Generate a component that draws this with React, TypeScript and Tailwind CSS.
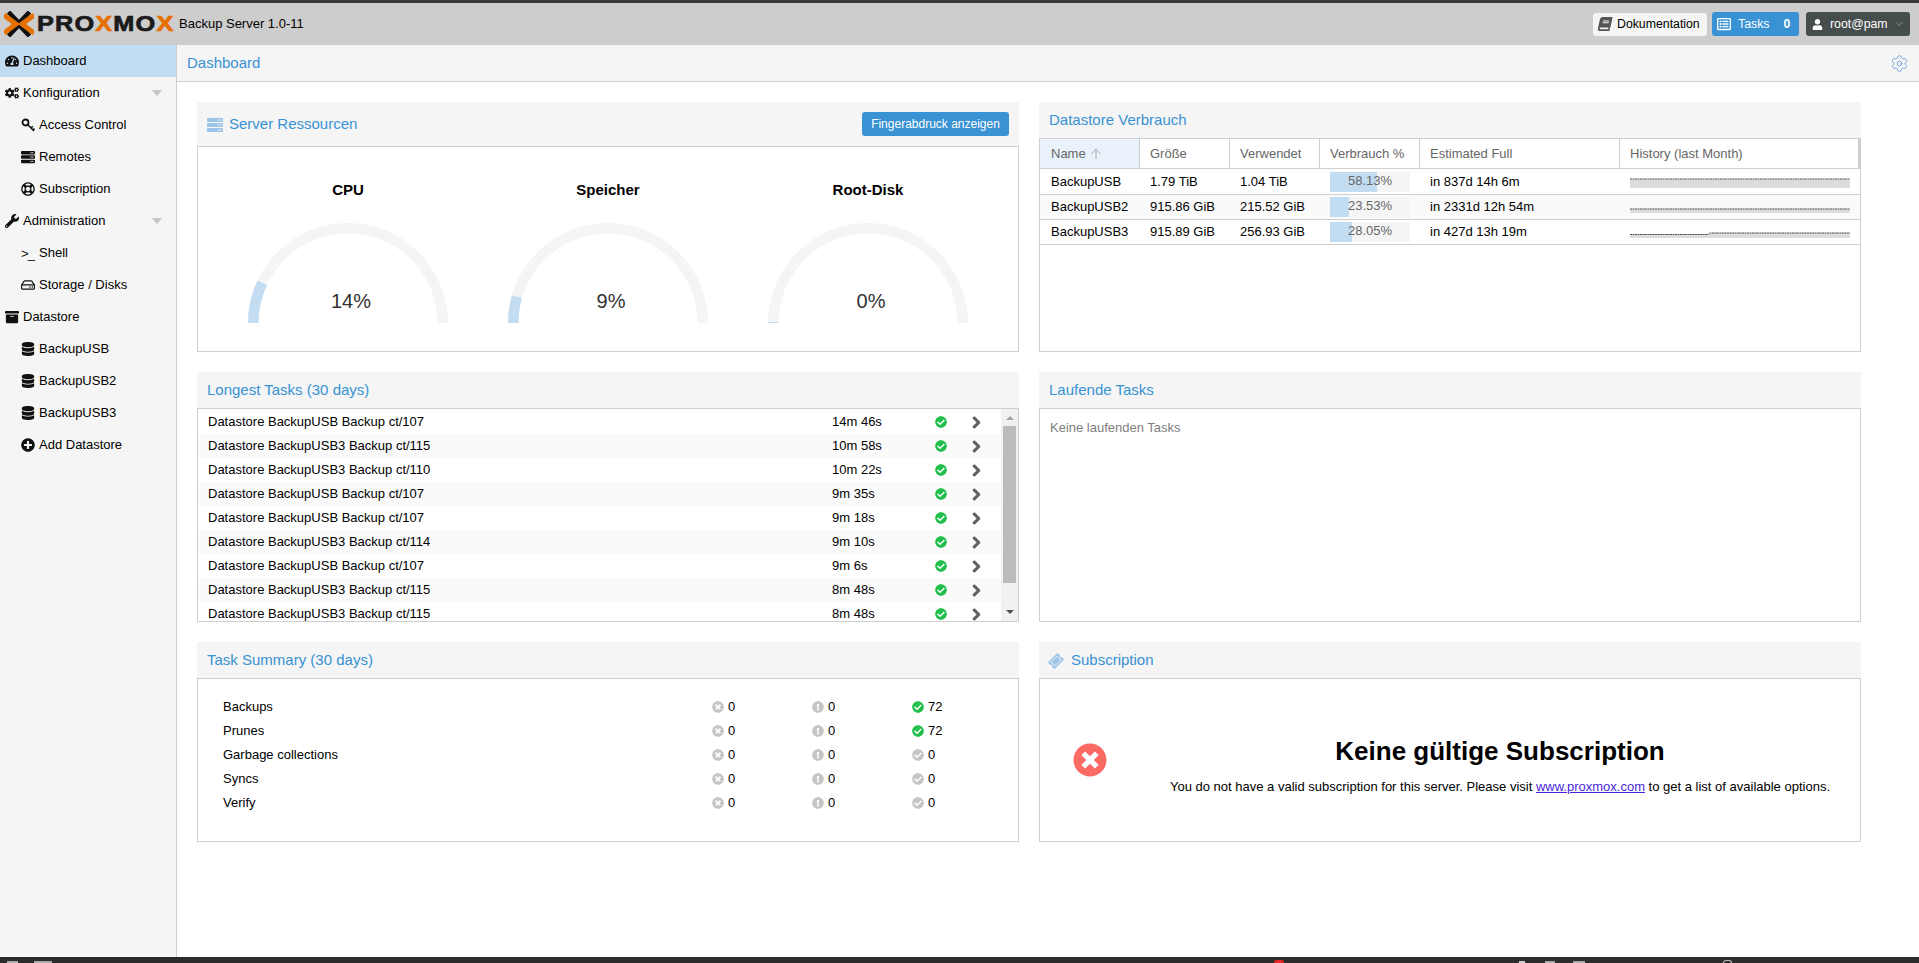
import React from 'react';
import {
  FaTachometerAlt, FaCogs, FaServer, FaRegLifeRing, FaWrench, FaRegHdd, FaArchive, FaDatabase,
  FaPlusCircle, FaBook, FaRegListAlt, FaUser, FaCheckCircle, FaChevronRight,
  FaTimesCircle, FaExclamationCircle, FaTicketAlt,
} from 'react-icons/fa';
import { ArrowUp, ChevronDown, Settings } from 'lucide-react';

const KeyIcon = () => (
  <svg width="14" height="14" viewBox="0 0 14 14" fill="none" stroke="#111">
    <circle cx="4.5" cy="4.5" r="3" strokeWidth="1.8" />
    <path d="M6.8 6.8 L13 13 M10 10 L11.8 8.2 M12 12 L13.5 10.5" strokeWidth="1.6" />
  </svg>
);

const menu = [
  { label: 'Dashboard', icon: <FaTachometerAlt />, active: true },
  { label: 'Konfiguration', icon: <FaCogs />, caret: true },
  { label: 'Access Control', icon: <KeyIcon />, sub: true },
  { label: 'Remotes', icon: <FaServer />, sub: true },
  { label: 'Subscription', icon: <FaRegLifeRing />, sub: true },
  { label: 'Administration', icon: <FaWrench />, caret: true },
  { label: 'Shell', icon: <span className="text-[13px] leading-none tracking-[-1px]">&gt;_</span>, sub: true },
  { label: 'Storage / Disks', icon: <FaRegHdd />, sub: true },
  { label: 'Datastore', icon: <FaArchive /> },
  { label: 'BackupUSB', icon: <FaDatabase />, sub: true },
  { label: 'BackupUSB2', icon: <FaDatabase />, sub: true },
  { label: 'BackupUSB3', icon: <FaDatabase />, sub: true },
  { label: 'Add Datastore', icon: <FaPlusCircle />, sub: true },
];

const gauges = [
  { title: 'CPU', pct: 14 },
  { title: 'Speicher', pct: 9 },
  { title: 'Root-Disk', pct: 0 },
];

const stores = [
  { name: 'BackupUSB', size: '1.79 TiB', used: '1.04 TiB', pct: 58.13, est: 'in 837d 14h 6m', line: 'M0 5 L220 5 L220 14 L0 14 Z', top: 'M0 5 L220 5' },
  { name: 'BackupUSB2', size: '915.86 GiB', used: '215.52 GiB', pct: 23.53, est: 'in 2331d 12h 54m', line: 'M0 10 L220 10 L220 14 L0 14 Z', top: 'M0 10 L220 10' },
  { name: 'BackupUSB3', size: '915.89 GiB', used: '256.93 GiB', pct: 28.05, est: 'in 427d 13h 19m', line: 'M0 10.5 L78 10.5 L80 9 L220 9 L220 14 L0 14 Z', top: 'M0 10.5 L78 10.5 L80 9 L220 9' },
];

const longest = [
  ['Datastore BackupUSB Backup ct/107', '14m 46s'],
  ['Datastore BackupUSB3 Backup ct/115', '10m 58s'],
  ['Datastore BackupUSB3 Backup ct/110', '10m 22s'],
  ['Datastore BackupUSB Backup ct/107', '9m 35s'],
  ['Datastore BackupUSB Backup ct/107', '9m 18s'],
  ['Datastore BackupUSB3 Backup ct/114', '9m 10s'],
  ['Datastore BackupUSB Backup ct/107', '9m 6s'],
  ['Datastore BackupUSB3 Backup ct/115', '8m 48s'],
  ['Datastore BackupUSB3 Backup ct/115', '8m 48s'],
];

const summary = [
  ['Backups', 72],
  ['Prunes', 72],
  ['Garbage collections', 0],
  ['Syncs', 0],
  ['Verify', 0],
];

// half ring from the left foot over the top, r=94.75 and 10.5 wide
function Gauge({ title, pct }: { title: string; pct: number }) {
  const len = Math.PI * 94.75;
  return (
    <div className="flex w-[200px] flex-col items-center">
      <div className="mt-[33px] h-[20px] text-[15px] leading-[20px] font-bold text-black">{title}</div>
      <div className="relative mt-[23px] h-[100px] w-[200px]">
        <svg width="200" height="100" viewBox="0 0 200 100" className="block">
          <path d="M5.25 100 A94.75 94.75 0 0 1 194.75 100" fill="none" stroke="#f5f5f5" strokeWidth="10.5" />
          <path
            d="M5.25 100 A94.75 94.75 0 0 1 194.75 100"
            fill="none"
            stroke="#c2ddf2"
            strokeWidth="10.5"
            strokeDasharray={`${Math.max((len * pct) / 100, 1)} ${len}`}
          />
        </svg>
        <div className="absolute top-[66px] left-[3px] w-full text-center text-[20px] leading-[24px] text-[#333]">{pct}%</div>
      </div>
    </div>
  );
}

function Panel({ title, icon, right, tall, className, children }: { title: string; icon?: React.ReactNode; right?: React.ReactNode; tall?: boolean; className?: string; children: React.ReactNode }) {
  return (
    <section className={`flex min-h-0 flex-col ${className ?? ''}`}>
      <header className={`flex shrink-0 items-center justify-between bg-[#f5f5f5] pr-[10px] pl-[10px] ${tall ? 'h-[44px]' : 'h-[36px]'}`}>
        <div className="flex items-center gap-[6px] pt-[1px] text-[15px] text-[#3892d4]">
          {icon}
          <span>{title}</span>
        </div>
        {right}
      </header>
      <div className="min-h-0 flex-1 border border-[#cfcfcf] bg-white">{children}</div>
    </section>
  );
}

function Count({ kind, value }: { kind: 'err' | 'warn' | 'ok'; value: number }) {
  const cls = value > 0 ? 'text-[#21bf4b]' : 'text-[#c5c5c5]';
  return (
    <div className="flex w-[100px] items-center gap-[4px]">
      {kind === 'err' && <FaTimesCircle className="text-[12px] text-[#c5c5c5]" />}
      {kind === 'warn' && <FaExclamationCircle className="text-[12px] text-[#c5c5c5]" />}
      {kind === 'ok' && <FaCheckCircle className={`text-[12px] ${cls}`} />}
      <span>{value}</span>
    </div>
  );
}

export default function App() {
  return (
    <div className="flex h-screen flex-col overflow-hidden bg-white text-[13px] text-black [font-family:Liberation_Sans,Arial,sans-serif]">
      <div className="h-[3px] shrink-0 bg-[#3a3a3a]" />
      <div className="flex h-[42px] shrink-0 items-center bg-[#cdcdcd] pr-[9px] pl-[4px]">
        <svg width="30" height="26" viewBox="0 0 30 26" className="shrink-0">
          <path d="M4.5 1 L15 12 L25.5 1 M4.5 25 L15 14 L25.5 25" fill="none" stroke="#111" strokeWidth="4.5" />
          <path d="M0 4 L12 13 L0 22 M30 4 L18 13 L30 22" fill="none" stroke="#e57000" strokeWidth="5" />
        </svg>
        <div className="ml-[3px] w-[137px] origin-left scale-x-[1.15] text-[22px] leading-none font-bold tracking-[1px] whitespace-nowrap text-[#1a1a1a] [-webkit-text-stroke:0.7px]">
          PRO<span className="text-[#e57000]">X</span>MO<span className="text-[#e57000]">X</span>
        </div>
        <div className="ml-[5px]">Backup Server 1.0-11</div>
        <div className="flex-1" />
        <div className="flex h-[23px] w-[114px] items-center gap-[5px] rounded-[3px] bg-[#f5f5f5] pl-[5px] text-[12.3px]">
          <FaBook className="shrink-0 -skew-x-12 text-[14px] text-[#555]" />
          <span>Dokumentation</span>
        </div>
        <div className="ml-[5px] flex h-[24px] w-[87px] items-center rounded-[3px] bg-[#3892d4] pl-[5px] text-[12.3px] text-white">
          <FaRegListAlt className="text-[14px]" />
          <span className="ml-[7px]">Tasks</span>
          <span className="ml-[14px] font-bold">0</span>
        </div>
        <div className="ml-[7px] flex h-[24px] w-[104px] items-center rounded-[3px] bg-[#464d4d] pl-[6px] text-[12.3px] text-white">
          <FaUser className="text-[11px]" />
          <span className="ml-[7px]">root@pam</span>
          <ChevronDown size={12} strokeWidth={1} className="ml-[5px] text-[#ccc]" />
        </div>
      </div>

      <div className="flex min-h-0 flex-1">
        <nav className="w-[177px] shrink-0 border-r border-[#cfcfcf] bg-[#f5f5f5]">
          {menu.map((m) => (
            <div
              key={m.label}
              className={`flex h-[32px] items-center ${m.active ? 'bg-[#c2ddf2]' : ''} ${m.sub ? 'pl-[20px]' : 'pl-[4px]'}`}
            >
              <span className="flex w-[15px] shrink-0 items-center justify-center text-[14px] text-[#111]">{m.icon}</span>
              <span className="ml-[4px]">{m.label}</span>
              {m.caret && <span className="mr-[14px] ml-auto h-0 w-0 border-x-[5px] border-t-[6px] border-x-transparent border-t-[#c4c4c4]" />}
            </div>
          ))}
        </nav>

        <main className="flex min-w-0 flex-1 flex-col">
          <div className="flex h-[37px] shrink-0 items-center justify-between border-b border-[#cfcfcf] bg-[#f5f5f5] pr-[10px] pl-[10px] text-[15px] text-[#3892d4]">
            <span>Dashboard</span>
            <Settings size={19} strokeWidth={1.2} className="text-[#6fa5da]" />
          </div>

          <div className="grid w-[1684px] grid-cols-[822px_822px] grid-rows-[250px_250px_200px] gap-x-[20px] gap-y-[20px] pt-[20px] pl-[20px]">
            <Panel
              tall
              title="Server Ressourcen"
              icon={<FaServer className="text-[16px] text-[#9cc4e8]" />}
              right={<div className="flex h-[24px] w-[147px] items-center justify-center rounded-[3px] bg-[#3892d4] text-[12px] text-white">Fingerabdruck anzeigen</div>}
            >
              <div className="flex gap-[60px] pl-[50px]">
                {gauges.map((g) => <Gauge key={g.title} {...g} />)}
              </div>
            </Panel>

            <Panel title="Datastore Verbrauch">
              <div className="grid h-[30px] grid-cols-[100px_90px_90px_100px_200px_1fr] border-b border-[#cfcfcf] text-[#666]">
                <div className="flex items-center gap-[2px] border-r border-[#cfcfcf] bg-[#eaf3fb] pl-[11px]">Name <ArrowUp size={16} strokeWidth={1.2} className="text-[#999]" /></div>
                <div className="flex items-center border-r border-[#cfcfcf] pl-[10px]">Größe</div>
                <div className="flex items-center border-r border-[#cfcfcf] pl-[10px]">Verwendet</div>
                <div className="flex items-center border-r border-[#cfcfcf] pl-[10px]">Verbrauch %</div>
                <div className="flex items-center border-r border-[#cfcfcf] pl-[10px]">Estimated Full</div>
                <div className="flex items-center border-r-2 border-[#cfcfcf] pl-[10px]">History (last Month)</div>
              </div>
              {stores.map((s, i) => (
                <div key={s.name} className={`grid grid-cols-[100px_90px_90px_100px_200px_1fr] items-center border-b border-[#cfcfcf] ${i === 0 ? 'h-[26px]' : 'h-[25px]'} ${i === 1 ? 'bg-[#fafafa]' : ''}`}>
                  <div className="pl-[11px]">{s.name}</div>
                  <div className="pl-[10px]">{s.size}</div>
                  <div className="pl-[10px]">{s.used}</div>
                  <div className="pl-[10px]">
                    <div className="relative h-[20px] w-[80px] bg-[#f5f5f5] text-center leading-[18px] text-[#666]">
                      <div className="absolute inset-y-0 left-0 bg-[#c2ddf2]" style={{ width: `${s.pct}%` }} />
                      <span className="relative">{s.pct.toFixed(2)}%</span>
                    </div>
                  </div>
                  <div className="pl-[10px]">{s.est}</div>
                  <div className="pl-[10px]">
                    <svg width="220" height="16" viewBox="0 0 220 16" className="block">
                      <path d={s.line} fill="#dcdcdc" />
                      <path d={s.top} fill="none" stroke="#555" strokeWidth="1" strokeDasharray="2 0.5" />
                    </svg>
                  </div>
                </div>
              ))}
            </Panel>

            <Panel title="Longest Tasks (30 days)">
              <div className="flex h-full">
                <div className="min-w-0 flex-1 overflow-hidden pt-[1px]">
                  {longest.map(([name, time], i) => (
                    <div key={i} className={`flex h-[24px] items-center pl-[10px] ${i % 2 ? 'bg-[#fafafa]' : ''}`}>
                      <span className="w-[624px] shrink-0">{name}</span>
                      <span className="w-[100px] shrink-0">{time}</span>
                      <FaCheckCircle className="ml-[3px] shrink-0 text-[12px] text-[#21bf4b]" />
                      <FaChevronRight className="ml-[23px] shrink-0 text-[13px] text-[#5f5f5f] [stroke-width:40]" />
                    </div>
                  ))}
                </div>
                <div className="flex w-[17px] shrink-0 flex-col items-center bg-[#f1f1f1]">
                  <span className="mt-[7px] h-0 w-0 border-x-[4px] border-b-[4px] border-x-transparent border-b-[#a3a3a3]" />
                  <div className="mt-[6px] h-[157px] w-[13px] bg-[#bcbcbc]" />
                  <span className="mt-auto mb-[7px] h-0 w-0 border-x-[4px] border-t-[4px] border-x-transparent border-t-[#505050]" />
                </div>
              </div>
            </Panel>

            <Panel title="Laufende Tasks">
              <div className="pt-[9px] pl-[10px] text-[#808080]">Keine laufenden Tasks</div>
            </Panel>

            <Panel title="Task Summary (30 days)">
              <div className="pt-[16px] pl-[25px]">
                {summary.map(([label, n]) => (
                  <div key={label} className="flex h-[24px] items-center">
                    <span className="w-[489px]">{label}</span>
                    <Count kind="err" value={0} />
                    <Count kind="warn" value={0} />
                    <Count kind="ok" value={n as number} />
                  </div>
                ))}
              </div>
            </Panel>

            <Panel title="Subscription" icon={<FaTicketAlt className="mr-[2px] -rotate-45 text-[14px] text-[#9cc4e8]" />}>
              <div className="flex h-full items-center">
                <FaTimesCircle className="ml-[33px] shrink-0 text-[34px] text-[#fb6a64]" />
                <div className="ml-[63px] flex-1 pt-[13px] pr-[30px] text-center">
                  <div className="text-[26px] leading-[30px] font-bold">Keine gültige Subscription</div>
                  <div className="mt-[11px]">
                    You do not have a valid subscription for this server. Please visit{' '}
                    <a href="#" className="text-[#4a1fe0] underline">www.proxmox.com</a> to get a list of available options.
                  </div>
                </div>
              </div>
            </Panel>
          </div>

          <div className="flex-1" />
        </main>
      </div>
      {/* cut-off taskbar of the machine the screenshot was taken on */}
      <div className="flex h-[6px] shrink-0 items-end bg-[#2c2c2c]">
        <span className="ml-[7px] h-[2px] w-[11px] bg-[#aaa]" />
        <span className="ml-[16px] h-[2px] w-[18px] bg-[#aaa]" />
        <span className="ml-[1222px] h-[3px] w-[10px] rounded-t-full bg-[#e5252a]" />
        <span className="ml-[235px] h-[2px] w-[6px] bg-[#ccc]" />
        <span className="ml-[20px] h-[2px] w-[10px] bg-[#aaa]" />
        <span className="ml-[18px] h-[2px] w-[12px] bg-[#aaa]" />
        <span className="ml-[138px] h-[3px] w-[9px] rounded-t-full border border-b-0 border-[#bbb]" />
      </div>
    </div>
  );
}
